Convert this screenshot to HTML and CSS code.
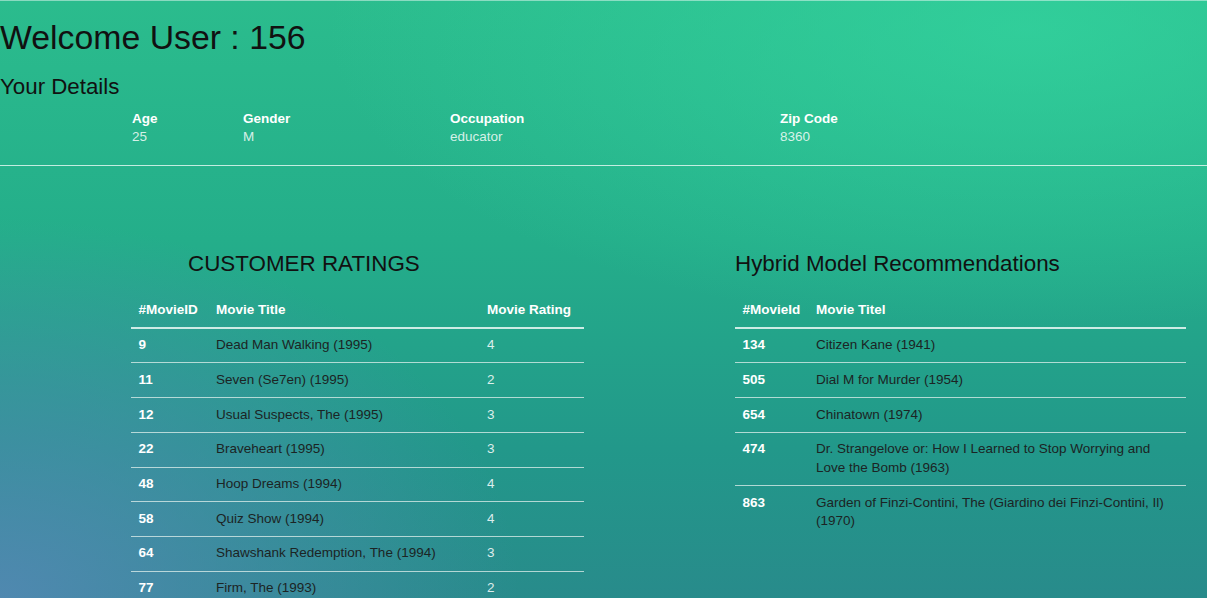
FILE: index.html
```html
<!DOCTYPE html>
<html lang="en">
<head>
<meta charset="utf-8">
<title>Welcome User : 156</title>
<link rel="stylesheet" href="styles.css">
</head>
<body>
<header class="top">
  <h1 class="welcome">Welcome User : 156</h1>
  <h3 class="subhead">Your Details</h3>
  <div class="details">
    <div class="detail"><div class="label">Age</div><div class="value">25</div></div>
    <div class="detail"><div class="label">Gender</div><div class="value">M</div></div>
    <div class="detail"><div class="label">Occupation</div><div class="value">educator</div></div>
    <div class="detail"><div class="label">Zip Code</div><div class="value">8360</div></div>
  </div>
</header>
<hr class="divider">
<main class="panels">
  <section class="panel">
    <h3 class="panel-title indent">CUSTOMER RATINGS</h3>
    <table class="grid ratings">
      <colgroup><col class="c-id"><col class="c-title"><col class="c-rate"></colgroup>
      <thead><tr><th>#MovieID</th><th>Movie Title</th><th>Movie Rating</th></tr></thead>
      <tbody>
        <tr><td class="id">9</td><td class="name">Dead Man Walking (1995)</td><td class="rate">4</td></tr>
        <tr><td class="id">11</td><td class="name">Seven (Se7en) (1995)</td><td class="rate">2</td></tr>
        <tr><td class="id">12</td><td class="name">Usual Suspects, The (1995)</td><td class="rate">3</td></tr>
        <tr><td class="id">22</td><td class="name">Braveheart (1995)</td><td class="rate">3</td></tr>
        <tr><td class="id">48</td><td class="name">Hoop Dreams (1994)</td><td class="rate">4</td></tr>
        <tr><td class="id">58</td><td class="name">Quiz Show (1994)</td><td class="rate">4</td></tr>
        <tr><td class="id">64</td><td class="name">Shawshank Redemption, The (1994)</td><td class="rate">3</td></tr>
        <tr><td class="id">77</td><td class="name">Firm, The (1993)</td><td class="rate">2</td></tr>
      </tbody>
    </table>
  </section>
  <section class="panel">
    <h3 class="panel-title">Hybrid Model Recommendations</h3>
    <table class="grid recs">
      <colgroup><col class="r-id"><col class="r-title"></colgroup>
      <thead><tr><th>#MovieId</th><th>Movie Titel</th></tr></thead>
      <tbody>
        <tr><td class="id">134</td><td class="name">Citizen Kane (1941)</td></tr>
        <tr><td class="id">505</td><td class="name">Dial M for Murder (1954)</td></tr>
        <tr><td class="id">654</td><td class="name">Chinatown (1974)</td></tr>
        <tr><td class="id">474</td><td class="name">Dr. Strangelove or: How I Learned to Stop Worrying and Love the Bomb (1963)</td></tr>
        <tr><td class="id">863</td><td class="name">Garden of Finzi-Contini, The (Giardino dei Finzi-Contini, Il) (1970)</td></tr>
      </tbody>
    </table>
  </section>
</main>
</body>
</html>
```
FILE: styles.css
```css
html {
  height: 100%;
}
body {
  margin: 0;
  min-height: 100%;
  box-sizing: border-box;
  border-top: 1px solid rgba(255, 255, 255, 0.45);
  font-family: "Liberation Sans", Arial, Helvetica, sans-serif;
  font-size: 13.5px;
  line-height: 18.6px;
  color: #222;
  background:
    radial-gradient(ellipse 520px 380px at 0% 100%, rgba(84, 136, 180, 0.9), rgba(84, 136, 180, 0) 100%),
    radial-gradient(ellipse 700px 300px at 85% 5%, rgba(52, 214, 160, 0.7), rgba(52, 214, 160, 0) 100%),
    linear-gradient(180deg, #2bbc8d 0%, #24ae8a 40%, #22988a 75%, #288b8b 100%);
  background-attachment: fixed;
  overflow: hidden;
}

.welcome {
  margin: 18px 0 9.3px;
  font-size: 33.8px;
  line-height: 1.1;
  font-weight: 400;
  color: #111;
}
.subhead {
  margin: 18.6px 0 9.3px;
  font-size: 22.3px;
  line-height: 1.1;
  font-weight: 400;
  color: #111;
}

.details {
  display: grid;
  grid-template-columns: 111px 207px 330px auto;
  padding-left: 132px;
  padding-top: 1px;
}
.label {
  font-weight: 700;
  color: #fff;
}
.value {
  color: rgba(255, 255, 255, 0.82);
}

.divider {
  margin: 18px 0 18.6px;
  border: 0;
  border-top: 1px solid rgba(235, 250, 245, 0.8);
  height: 0;
}

.panels {
  display: grid;
  grid-template-columns: 453px 451px;
  column-gap: 151px;
  padding: 65px 0 0 131px;
  align-items: start;
}
.panel-title {
  margin: 3px 0 16.3px;
  font-size: 22.4px;
  line-height: 1.1;
  font-weight: 400;
  color: #111;
}
.indent {
  padding-left: 57px;
}

.grid {
  width: 100%;
  border-collapse: collapse;
  table-layout: fixed;
}
.c-id { width: 77.6px; }
.c-title { width: 271px; }
.c-rate { width: auto; }
.r-id { width: 73.5px; }
.r-title { width: auto; }

.grid th {
  padding: 7.44px;
  text-align: left;
  font-weight: 700;
  color: #fff;
  border-bottom: 2px solid rgba(235, 248, 244, 0.85);
  vertical-align: bottom;
}
.grid td {
  padding: 7.55px 7.44px;
  vertical-align: top;
  border-top: 1px solid rgba(225, 240, 236, 0.75);
}
.grid tbody tr:first-child td {
  border-top: 0;
}
.id {
  font-weight: 700;
  color: #fff;
}
.name {
  color: #1c2424;
}
.rate {
  color: rgba(255, 255, 255, 0.85);
}
```
